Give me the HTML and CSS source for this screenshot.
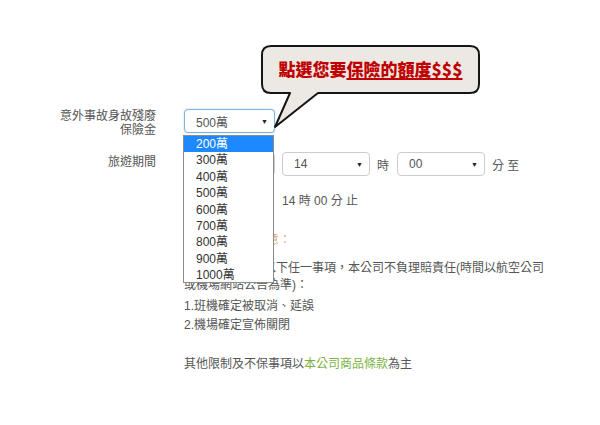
FILE: index.html
```html
<!DOCTYPE html>
<html lang="zh-Hant">
<head>
<meta charset="utf-8">
<title>保險</title>
<link rel="stylesheet" href="styles.css">
</head>
<body>
<div class="page">
  <div class="form">
    <div class="label">意外事故身故殘廢<br>保險金</div>
    <div class="controls">
      <div class="select focus w91"><span>500萬</span><span class="arrow">▼</span></div>
    </div>

    <div class="label single">旅遊期間</div>
    <div class="controls">
      <div class="select w90"></div>
      <div class="select w88"><span>14</span><span class="arrow">▼</span></div>
      <span class="unit">時</span>
      <div class="select w88"><span>00</span><span class="arrow">▼</span></div>
      <span class="unit">分 至</span>
    </div>

    <div class="label"></div>
    <div class="controls textrow">
      <span class="date"></span>
      <span>14 時 00 分 止</span>
    </div>

    <div class="notes">
      <div class="heading">意：</div>
      <p class="para"><span class="indent">以</span>下任一事項，本公司不負理賠責任(時間以航空公司<br>或機場網站公告為準)：</p>
      <div class="item">1.班機確定被取消、延誤</div>
      <div class="item">2.機場確定宣佈關閉</div>
      <div class="item last">其他限制及不保事項以<span class="link">本公司商品條款</span>為主</div>
    </div>
  </div>

  <ul class="dropdown">
    <li class="active">200萬</li>
    <li>300萬</li>
    <li>400萬</li>
    <li>500萬</li>
    <li>600萬</li>
    <li>700萬</li>
    <li>800萬</li>
    <li>900萬</li>
    <li>1000萬</li>
  </ul>

  <div class="bubble">
    <svg class="bubble-shape" width="230" height="95" viewBox="0 0 230 95">
      <path d="M16 6 H215 Q224 6 224 15 V44 Q224 53 215 53 H63 L20 87 L35 53 H16 Q7 53 7 44 V15 Q7 6 16 6 Z" fill="#ece8e3" stroke="#151515" stroke-width="2" stroke-linejoin="round"/>
    </svg>
    <div class="bubble-text">點選您要<u>保險的額度$$$</u></div>
  </div>
</div>
</body>
</html>
```

FILE: styles.css
```css
* { box-sizing: border-box; }
html, body { margin: 0; padding: 0; background: #fff; }
body {
  font-family: "Liberation Sans", "Noto Sans CJK TC", sans-serif;
  font-size: 12px;
  color: #555;
}
.page {
  position: relative;
  width: 600px;
  height: 425px;
  padding-top: 109px;
}
.form {
  display: grid;
  grid-template-columns: 156px 1fr;
  column-gap: 28px;
  row-gap: 15px;
}
.label {
  text-align: right;
  line-height: 14px;
}
.label.single { line-height: 20px; }
.controls {
  display: flex;
  align-items: center;
  gap: 7px;
  align-self: start;
}
.select {
  height: 24px;
  border: 1px solid #ccc;
  border-radius: 4px;
  background: #fff;
  display: flex;
  align-items: center;
  justify-content: space-between;
  padding: 0 6px 0 11px;
  color: #555;
}
.select.focus {
  border-color: #7fb3dd;
  box-shadow: 0 0 2px rgba(102, 175, 233, 0.5);
}
.w91 { width: 91px; }
.w90 { width: 91px; }
.w88 { width: 88px; }
.arrow {
  font-size: 7px;
  color: #222;
}
.unit { margin-right: 1px; }
.textrow { line-height: 20px; }
.date { width: 91px; }
.notes {
  grid-column: 2;
  padding-top: 4px;
}
.heading {
  color: #e8a36f;
  line-height: 20px;
  padding-left: 83px;
}
.para {
  margin: 10px 0 3px;
  line-height: 17px;
}
.indent { padding-left: 80px; }
.item { line-height: 19px; }
.item.last { margin-top: 20px; }
.link { color: #7cb342; }

.dropdown {
  position: absolute;
  left: 183px;
  top: 135px;
  width: 91px;
  height: 148px;
  margin: 0;
  padding: 0;
  list-style: none;
  background: #fff;
  border: 1px solid #8c8c8c;
  color: #333;
}
.dropdown li {
  height: 16.4px;
  line-height: 16px;
  padding-left: 12px;
}
.dropdown li.active {
  background: #1e88ff;
  color: #fff;
}

.bubble {
  position: absolute;
  left: 255px;
  top: 40px;
  width: 230px;
  height: 95px;
}
.bubble-shape { display: block; }
.bubble-text {
  position: absolute;
  left: 7px;
  top: 6px;
  width: 217px;
  height: 47px;
  display: flex;
  align-items: center;
  justify-content: center;
  font-family: "Noto Sans CJK TC", sans-serif;
  font-weight: 900;
  font-size: 17px;
  color: #c00000;
  padding-bottom: 2px;
}
.bubble-text u { text-underline-offset: 2px; text-decoration-thickness: 2px; }
```
